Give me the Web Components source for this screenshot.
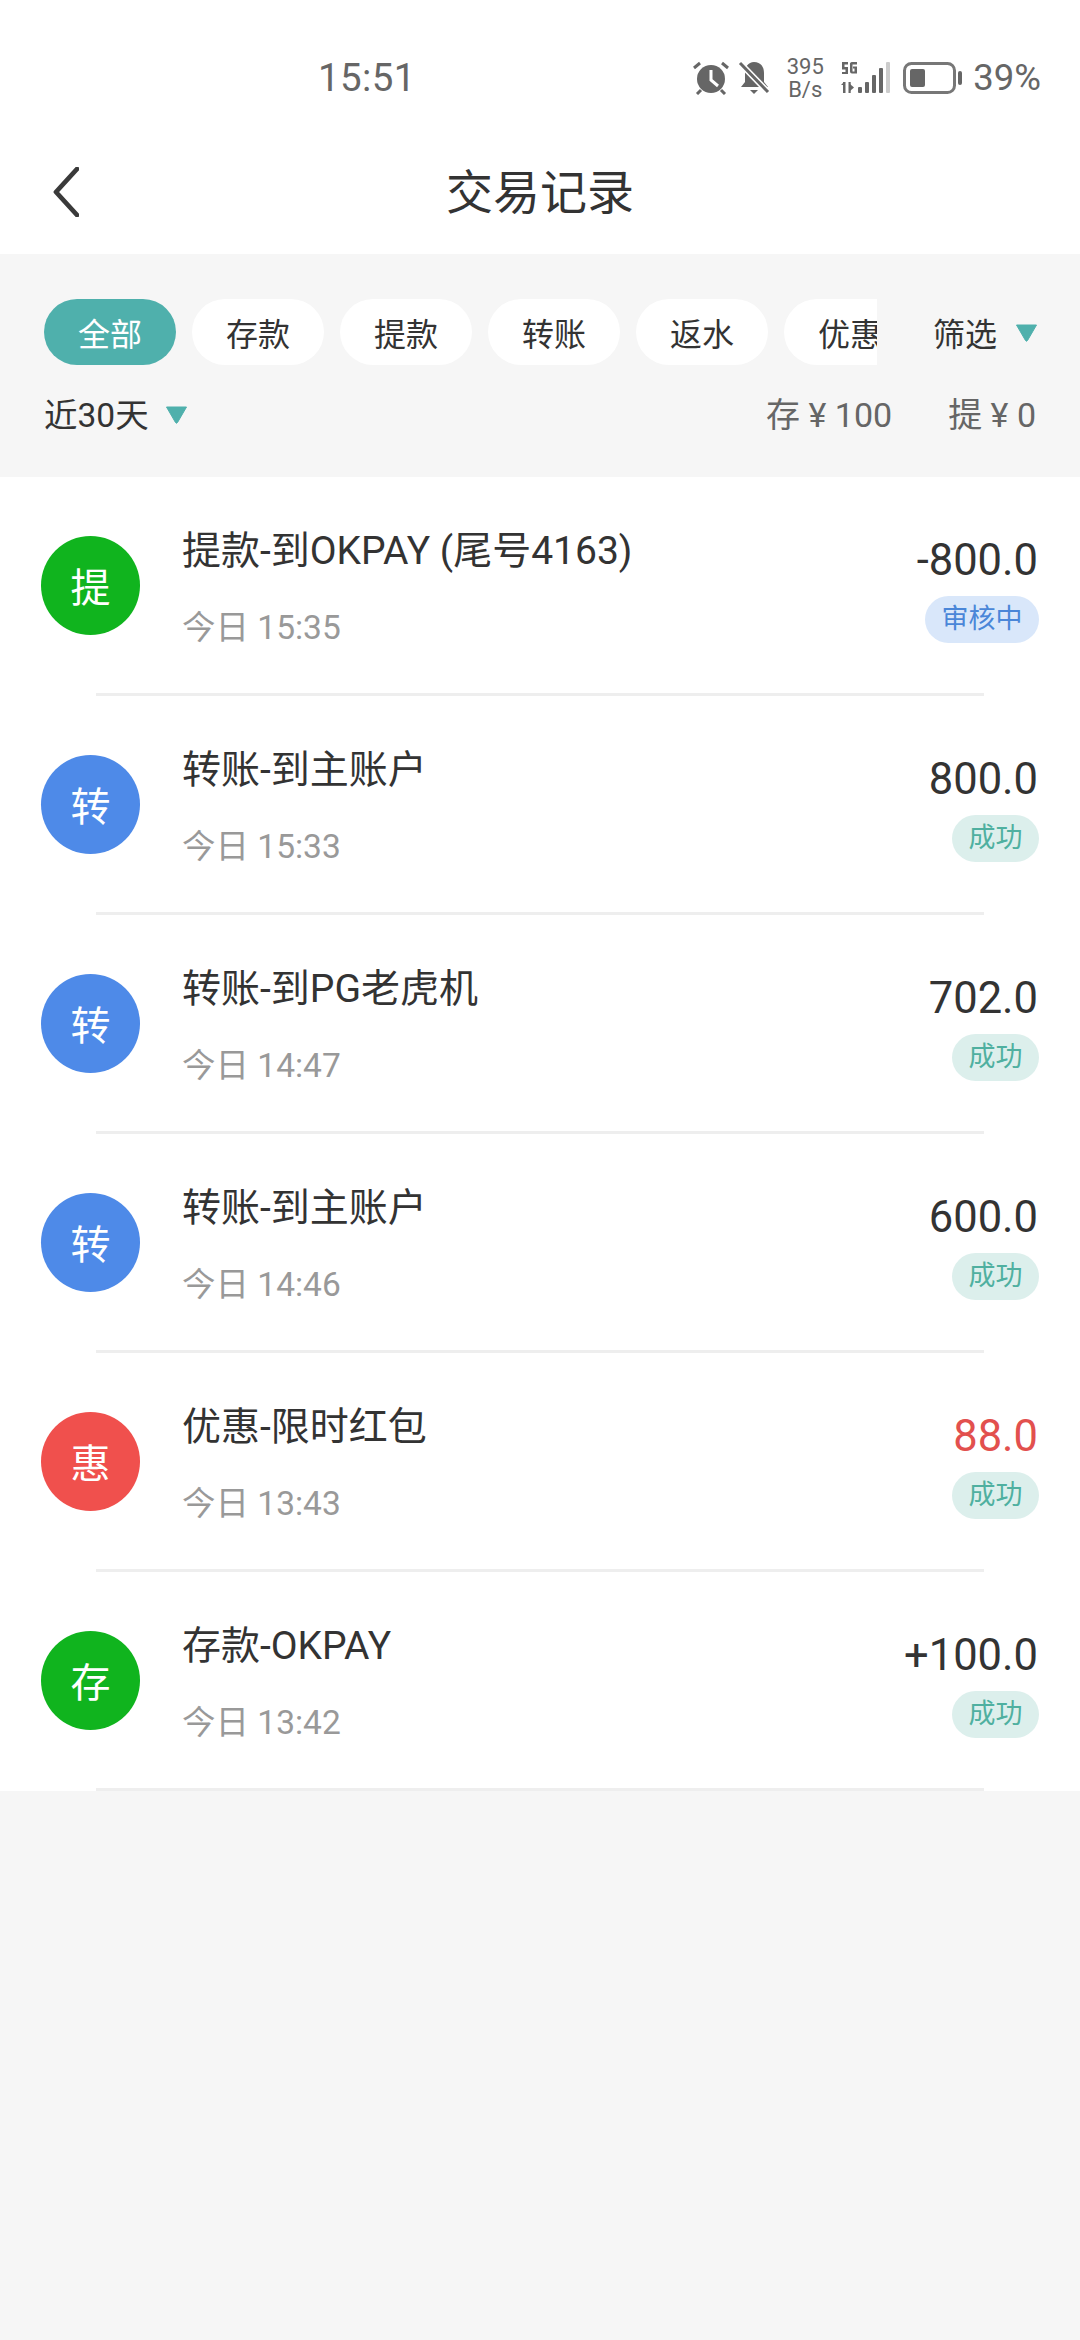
<!DOCTYPE html>
<html lang="zh"><head><meta charset="utf-8"><title>交易记录</title>
<style>
html,body{margin:0;padding:0;background:#f6f6f6}
body{width:1080px;min-height:2340px;font-family:Roboto,"Noto Sans CJK SC",sans-serif;color:#333}
</style></head><body>
<status-bar></status-bar>
<nav-bar title="交易记录"></nav-bar>
<filter-bar>
  <filter-chip active>全部</filter-chip>
  <filter-chip>存款</filter-chip>
  <filter-chip>提款</filter-chip>
  <filter-chip>转账</filter-chip>
  <filter-chip>返水</filter-chip>
  <filter-chip>优惠</filter-chip>
</filter-bar>
<tx-list>
  <tx-row kind="提" color="#10b41e" title="提款-到OKPAY (尾号4163)" time="今日 15:35" amount="-800.0" status="审核中" tone="blue"></tx-row>
  <tx-row kind="转" color="#4e8ae8" title="转账-到主账户" time="今日 15:33" amount="800.0" status="成功"></tx-row>
  <tx-row kind="转" color="#4e8ae8" title="转账-到PG老虎机" time="今日 14:47" amount="702.0" status="成功"></tx-row>
  <tx-row kind="转" color="#4e8ae8" title="转账-到主账户" time="今日 14:46" amount="600.0" status="成功"></tx-row>
  <tx-row kind="惠" color="#f0504d" title="优惠-限时红包" time="今日 13:43" amount="88.0" status="成功" amount-color="#e2504e"></tx-row>
  <tx-row kind="存" color="#10b41e" title="存款-OKPAY" time="今日 13:42" amount="+100.0" status="成功"></tx-row>
</tx-list>
<script>
const tri='<svg width="23" height="18" viewBox="0 0 23 18" style="flex:none"><path d="M1.5 1h20L12.5 16.5a1.2 1.2 0 0 1-2 0z" fill="#4fb0ac" stroke="#4fb0ac" stroke-width="1" stroke-linejoin="round"/></svg>';
function def(name,render){customElements.define(name,class extends HTMLElement{
  connectedCallback(){if(!this.shadowRoot){this.attachShadow({mode:'open'}).innerHTML=render(this)}}
})}
def('status-bar',()=>`<style>
:host{display:flex;height:130px;background:#fff;align-items:flex-start;justify-content:space-between;padding:0 39px 0 318px;box-sizing:border-box;color:#666}
.t{font-size:38.5px;line-height:44px;margin-top:56px;letter-spacing:.4px;flex:none}
.i{display:flex;align-items:center;height:34px;margin-top:61px;flex:none}
.sp{font-size:22px;text-align:center;width:40px;margin:0 16px 0 15px;flex:none}
.sp div{line-height:23px;height:23px}
.p{font-size:36.5px;line-height:34px;margin-left:10px;flex:none}
svg{display:block;flex:none}
</style>
<div class="t">15:51</div>
<div class="i">
<svg width="36" height="34" viewBox="0 0 36 34"><circle cx="18" cy="18" r="14" fill="#666"/><path d="M18 9v10l7 6" stroke="#fff" stroke-width="3" fill="none"/><path d="M1 7l6-5M35 7l-6-5M8 29l-4 4M28 29l4 4" stroke="#666" stroke-width="3"/></svg>
<svg width="32" height="34" viewBox="0 0 32 34" style="margin-left:9px"><path d="M16 1c7 0 10 5 10 11v9l4 5H3l4-5v-9C7 6 10 1 16 1z" fill="#666"/><path d="M12 29h8l-4 4z" fill="#666"/><path d="M2 2l28 29" stroke="#fff" stroke-width="6"/><path d="M2 2l28 29" stroke="#666" stroke-width="3"/></svg>
<div class="sp"><div>395</div><div>B/s</div></div>
<svg width="51" height="32" viewBox="0 0 51 32"><g fill="#666"><rect x="1" y="0" width="6" height="2.500"/><rect x="1" y="0" width="2.500" height="7"/><rect x="1" y="5" width="6" height="2.500"/><rect x="4.500" y="5" width="2.500" height="7"/><rect x="1" y="10" width="6" height="2"/><path d="M9 2.500a2 2 0 0 1 2-2.500h5v2.500h-4.500v7h2v-3h-1.500v-2h4v7h-5a2 2 0 0 1-2-2z"/><rect x="2" y="20" width="2.500" height="11"/><path d="M0 23l3-3v3z"/><rect x="7.500" y="20" width="2.200" height="11"/><path d="M9 22l4 3.500-4 3.500z"/><rect x="17" y="25" width="4" height="6" rx="1"/><rect x="24" y="20" width="4" height="11" rx="1"/><rect x="31" y="13" width="4" height="18" rx="1"/><rect x="38" y="6" width="4" height="25" rx="1"/><rect x="45" y="0" width="4" height="31" rx="1" fill="#ccc"/></g></svg>
<svg width="60" height="32" viewBox="0 0 60 32" style="margin-left:11px"><rect x="1.500" y="1.500" width="50" height="29" rx="7" fill="none" stroke="#777" stroke-width="3"/><rect x="7" y="7" width="15" height="18" rx="2" fill="#666"/><rect x="55" y="9" width="4" height="14" rx="2" fill="#666"/></svg>
<div class="p">39%</div>
</div>`);
def('nav-bar',h=>`<style>
:host{display:flex;height:124px;background:#fff;align-items:center;justify-content:center;position:relative}
.b{position:absolute;left:53px;top:37px;display:block}
.t{font-size:47px;line-height:60px;margin-top:2px;color:#333}
</style>
<svg class="b" width="26" height="50" viewBox="0 0 26 50"><path d="M24 2L3 25l21 23" fill="none" stroke="#3a3a3a" stroke-width="4.800" stroke-linecap="round" stroke-linejoin="round"/></svg>
<div class="t">${h.getAttribute('title')}</div>`);
def('filter-chip',h=>`<style>
:host{display:flex;flex:none;width:132px;height:66px;border-radius:33px;align-items:center;justify-content:center;font-size:32px;background:${h.hasAttribute('active')?'#4fb0ac':'#fff'};color:${h.hasAttribute('active')?'#fff':'#333'}}
</style><slot></slot>`);
def('filter-bar',()=>`<style>
:host{display:block;height:223px;box-sizing:border-box;padding-top:45px;background:#f6f6f6}
.r1{display:flex;align-items:center;height:66px}
.sc{display:flex;gap:16px;width:833px;margin-left:44px;overflow:hidden;flex:none}
.f{display:flex;align-items:center;font-size:32px;margin-left:56px}
.f svg{margin-left:18px;margin-top:1px}
.r2{display:flex;align-items:center;height:44px;margin-top:25px;padding:0 44px;font-size:33.500px}
.r2 svg{margin-left:16px;margin-top:5px}
.g{flex:1}.s{color:#666;font-size:34px;margin-left:56px}
</style>
<div class="r1"><div class="sc"><slot></slot></div><div class="f">筛选${tri}</div></div>
<div class="r2"><span>近30天</span>${tri}<span class="g"></span><span class="s">存 ¥ 100</span><span class="s">提 ¥ 0</span></div>`);
def('tx-list',()=>`<style>:host{display:block;background:#fff}</style><slot></slot>`);
def('tx-row',h=>{const a=k=>h.getAttribute(k);const blue=a('tone')==='blue';return `<style>
:host{display:block;height:219px;box-sizing:border-box;position:relative}
.m{display:flex;height:216px;padding:0 41px}
.av{width:99px;height:99px;border-radius:50%;background:${a('color')};color:#fff;font-size:40px;display:flex;align-items:center;justify-content:center;flex:none;align-self:center}
.tx{flex:1;margin-left:42px;padding-top:49px}
.ti{font-size:39px;line-height:50px;color:#333;white-space:nowrap}
.tm{font-size:33.500px;line-height:44px;color:#999;margin-top:30px}
.rt{display:flex;flex-direction:column;align-items:flex-end;padding-top:56px}
.am{font-size:43.500px;line-height:56px;margin-right:1px;color:${a('amount-color')||'#333'}}
.bd{height:47px;line-height:47px;border-radius:24px;padding:0 16.500px;margin-top:7px;font-size:27px;color:${blue?'#4a86d8':'#4fb0a0'};background:${blue?'#d9e7fa':'#dcefec'}}
.dv{height:3px;margin:0 96px;background:#eeeeee}
</style>
<div class="m"><div class="av">${a('kind')}</div>
<div class="tx"><div class="ti">${a('title')}</div><div class="tm">${a('time')}</div></div>
<div class="rt"><div class="am">${a('amount')}</div><div class="bd">${a('status')}</div></div></div>
<div class="dv"></div>`});
</script>
</body></html>
